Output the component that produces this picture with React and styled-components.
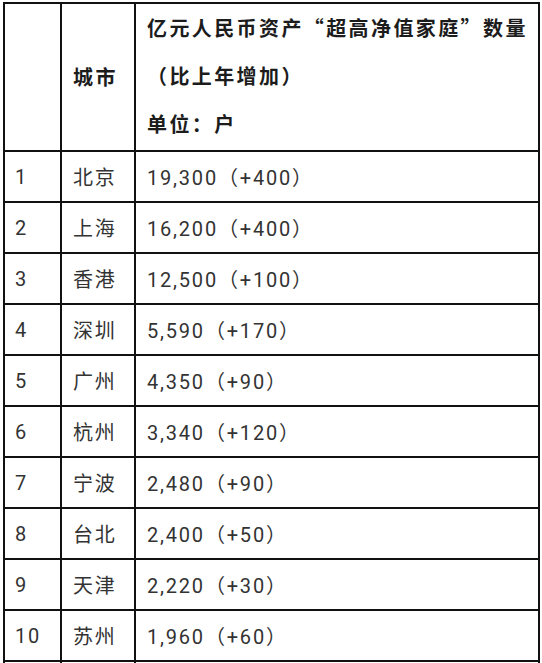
import React from "react";
import styled, { createGlobalStyle } from "styled-components";

const Global = createGlobalStyle`
  html, body { margin: 0; padding: 0; background: #fff; }
  body { font-family: Roboto, "Noto Sans CJK SC", sans-serif; }
`;

const Table = styled.table`
  margin: 2px 0 0 3px;
  width: 537px;
  border-collapse: separate;
  border-spacing: 0;
  border-top: 2px solid #111;
  border-left: 2px solid #111;
  table-layout: fixed;
`;

const Col = styled.col`
  width: ${(p) => p.$w}px;
`;

const HeadCell = styled.th`
  box-sizing: border-box;
  height: 148px;
  padding: 0 11px;
  border-right: 2px solid #111;
  border-bottom: 2px solid #111;
  text-align: left;
  vertical-align: middle;
  font-family: "Noto Sans CJK SC", sans-serif;
  font-weight: 700;
  font-size: 20px;
  line-height: 48px;
  letter-spacing: 2.4px;
  color: #1c1c1c;
`;

const HeadLine = styled.div`
  white-space: nowrap;
  &:first-child { margin-top: -3px; }
`;

const Cell = styled.td`
  box-sizing: border-box;
  height: 51px;
  padding: 0 11px 0 ${(p) => (p.$first ? 10 : 11)}px;
  border-right: 2px solid #111;
  border-bottom: 2px solid #111;
  vertical-align: middle;
  font-family: Roboto, "Noto Sans CJK SC", sans-serif;
  font-weight: 400;
  font-size: 20px;
  letter-spacing: 1.8px;
  color: #333;
  white-space: nowrap;
`;

const rows = [
  ["1", "北京", "19,300（+400）"],
  ["2", "上海", "16,200（+400）"],
  ["3", "香港", "12,500（+100）"],
  ["4", "深圳", "5,590（+170）"],
  ["5", "广州", "4,350（+90）"],
  ["6", "杭州", "3,340（+120）"],
  ["7", "宁波", "2,480（+90）"],
  ["8", "台北", "2,400（+50）"],
  ["9", "天津", "2,220（+30）"],
  ["10", "苏州", "1,960（+60）"],
  ["", "", ""],
];

export default function App() {
  return (
    <>
      <Global />
      <Table>
        <colgroup>
          <Col $w={57} />
          <Col $w={74} />
          <Col $w={404} />
        </colgroup>
        <thead>
          <tr>
            <HeadCell />
            <HeadCell>城市</HeadCell>
            <HeadCell>
              <HeadLine>亿元人民币资产“超高净值家庭”数量</HeadLine>
              <HeadLine>（比上年增加）</HeadLine>
              <HeadLine>单位：户</HeadLine>
            </HeadCell>
          </tr>
        </thead>
        <tbody>
          {rows.map((r, i) => (
            <tr key={i}>
              <Cell $first>{r[0]}</Cell>
              <Cell>{r[1]}</Cell>
              <Cell>{r[2]}</Cell>
            </tr>
          ))}
        </tbody>
      </Table>
    </>
  );
}
